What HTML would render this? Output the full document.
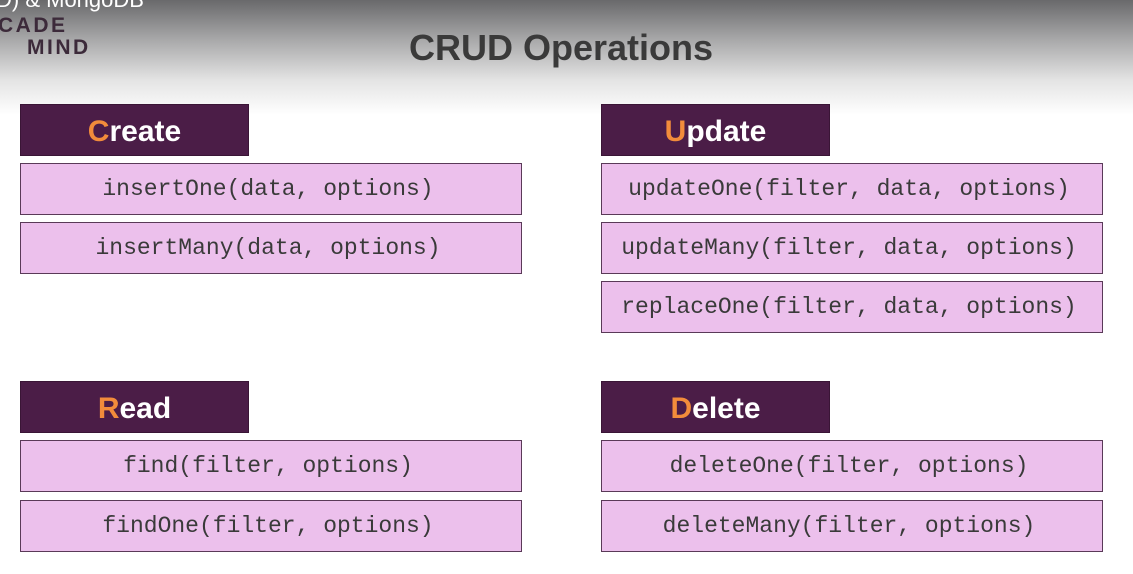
<!DOCTYPE html>
<html><head><style>
body{margin:0;width:1133px;height:574px;overflow:hidden;background:#fff;position:relative;font-family:"Liberation Sans",sans-serif}
.grad{position:absolute;left:0;top:0;width:1133px;height:115px;background:linear-gradient(#69696b 0%,#a9a9aa 35%,#e4e4e4 70%,#fff 100%)}
.top{position:absolute;left:-4px;top:-13px;color:#fff;font-size:22px}
.logo{position:absolute;font-weight:bold;color:#3c2a3a;font-size:21px;letter-spacing:2.5px}
h1{position:absolute;left:0;width:1122px;text-align:center;top:27px;margin:0;font-size:36px;color:#3a3a3a;font-weight:bold}
.hd{position:absolute;width:229px;height:52px;background:#4b1d47;color:#fff;font-weight:bold;font-size:30px;text-align:center;line-height:54px;box-sizing:border-box;border:1px solid #3a1536}
.hd b{color:#f28c3b}
.bx{position:absolute;width:502px;height:52px;background:#ecc0ec;border:1.5px solid #5a3a58;box-sizing:border-box;text-align:center;line-height:50px;font-family:"Liberation Mono",monospace;font-size:23px;color:#3a3a3a;text-indent:-6px}
</style></head><body>
<div class="grad"></div>
<div class="top">D) &amp; MongoDB</div>
<div class="logo" style="left:-2px;top:14px">CADE</div>
<div class="logo" style="left:27px;top:36px">MIND</div>
<h1>CRUD Operations</h1>
<div class="hd" style="left:20px;top:104px"><b>C</b>reate</div>
<div class="bx" style="left:20px;top:163px">insertOne(data, options)</div>
<div class="bx" style="left:20px;top:222px">insertMany(data, options)</div>
<div class="hd" style="left:601px;top:104px"><b>U</b>pdate</div>
<div class="bx" style="left:601px;top:163px">updateOne(filter, data, options)</div>
<div class="bx" style="left:601px;top:222px">updateMany(filter, data, options)</div>
<div class="bx" style="left:601px;top:281px">replaceOne(filter, data, options)</div>
<div class="hd" style="left:20px;top:381px"><b>R</b>ead</div>
<div class="bx" style="left:20px;top:440px">find(filter, options)</div>
<div class="bx" style="left:20px;top:500px">findOne(filter, options)</div>
<div class="hd" style="left:601px;top:381px"><b>D</b>elete</div>
<div class="bx" style="left:601px;top:440px">deleteOne(filter, options)</div>
<div class="bx" style="left:601px;top:500px">deleteMany(filter, options)</div>
</body></html>
